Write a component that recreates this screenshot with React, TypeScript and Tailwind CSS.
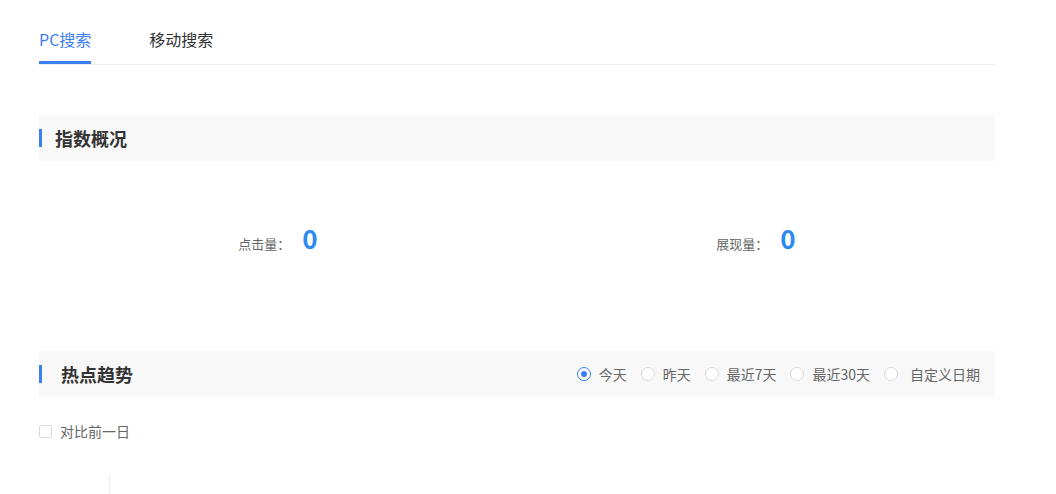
const ranges = ["今天", "昨天", "最近7天", "最近30天", "自定义日期"];

const SectionHeader: React.FC<{ title: string; textPad: string; children?: React.ReactNode }> = ({ title, textPad, children }) => {
	return (
		<div className="flex items-center justify-between h-[46px] bg-[#f8f8f8] pr-[15px]">
			<div className="flex items-center">
				<span className="w-[3px] h-[18px] bg-[#3c7ef3]" />
				<h2 className={`text-[18px] font-bold text-[#333] ${textPad}`}>{title}</h2>
			</div>
			{children}
		</div>
	);
};

const App: React.FC = () => {
	return (
		<div className="w-[1056px] h-[494px] overflow-hidden bg-white font-['Noto_Sans_CJK_SC','Noto_Sans',sans-serif]">
			<div className="mx-[39px] w-[956px]">
				<div className="flex gap-[58px] pt-[27px] border-b border-[#eeeeee]">
					<div className="pb-[10px] border-b-[3px] border-[#3c7ef3] text-[16px] leading-6 text-[#3c7ef3]">PC搜索</div>
					<div className="pb-[10px] border-b-[3px] border-transparent text-[16px] leading-6 text-[#333]">移动搜索</div>
				</div>

				<div className="mt-[50px]">
					<SectionHeader title="指数概况" textPad="ml-[13px]" />
				</div>

				<div className="grid grid-cols-2 pt-[61px] h-[190px]">
					<div className="flex items-baseline justify-center gap-[12px]">
						<span className="text-[13px] text-[#666]">点击量：</span>
						<span className="text-[26px] font-bold text-[#2a8af2] leading-8">0</span>
					</div>
					<div className="flex items-baseline justify-center gap-[12px]">
						<span className="text-[13px] text-[#666]">展现量：</span>
						<span className="text-[26px] font-bold text-[#2a8af2] leading-8">0</span>
					</div>
				</div>

				<SectionHeader title="热点趋势" textPad="ml-[19px]">
					<div className="flex items-center gap-[14px]">
						{ranges.map((r, i) => (
							<label key={r} className="flex items-center gap-[8px] text-[14px] leading-5 text-[#666]">
								<span className={`flex items-center justify-center w-[14px] h-[14px] rounded-full border bg-white ${i === 0 ? "border-[#3c7ef3]" : "border-[#d9d9d9]"}`}>
									{i === 0 && <span className="w-[6px] h-[6px] rounded-full bg-[#3c7ef3]" />}
								</span>
								<span className={i === 4 ? "ml-[4px]" : ""}>{r}</span>
							</label>
						))}
					</div>
				</SectionHeader>

				<label className="flex items-center gap-[8px] mt-[24px] text-[14px] leading-5 text-[#666]">
					<span className="w-[13px] h-[13px] rounded-[2px] border border-[#d9d9d9] bg-white" />
					对比前一日
				</label>

				<div className="ml-[70px] mt-[34px] w-px h-[30px] bg-[#eeeeee]" />
			</div>
		</div>
	);
};

export default App;
